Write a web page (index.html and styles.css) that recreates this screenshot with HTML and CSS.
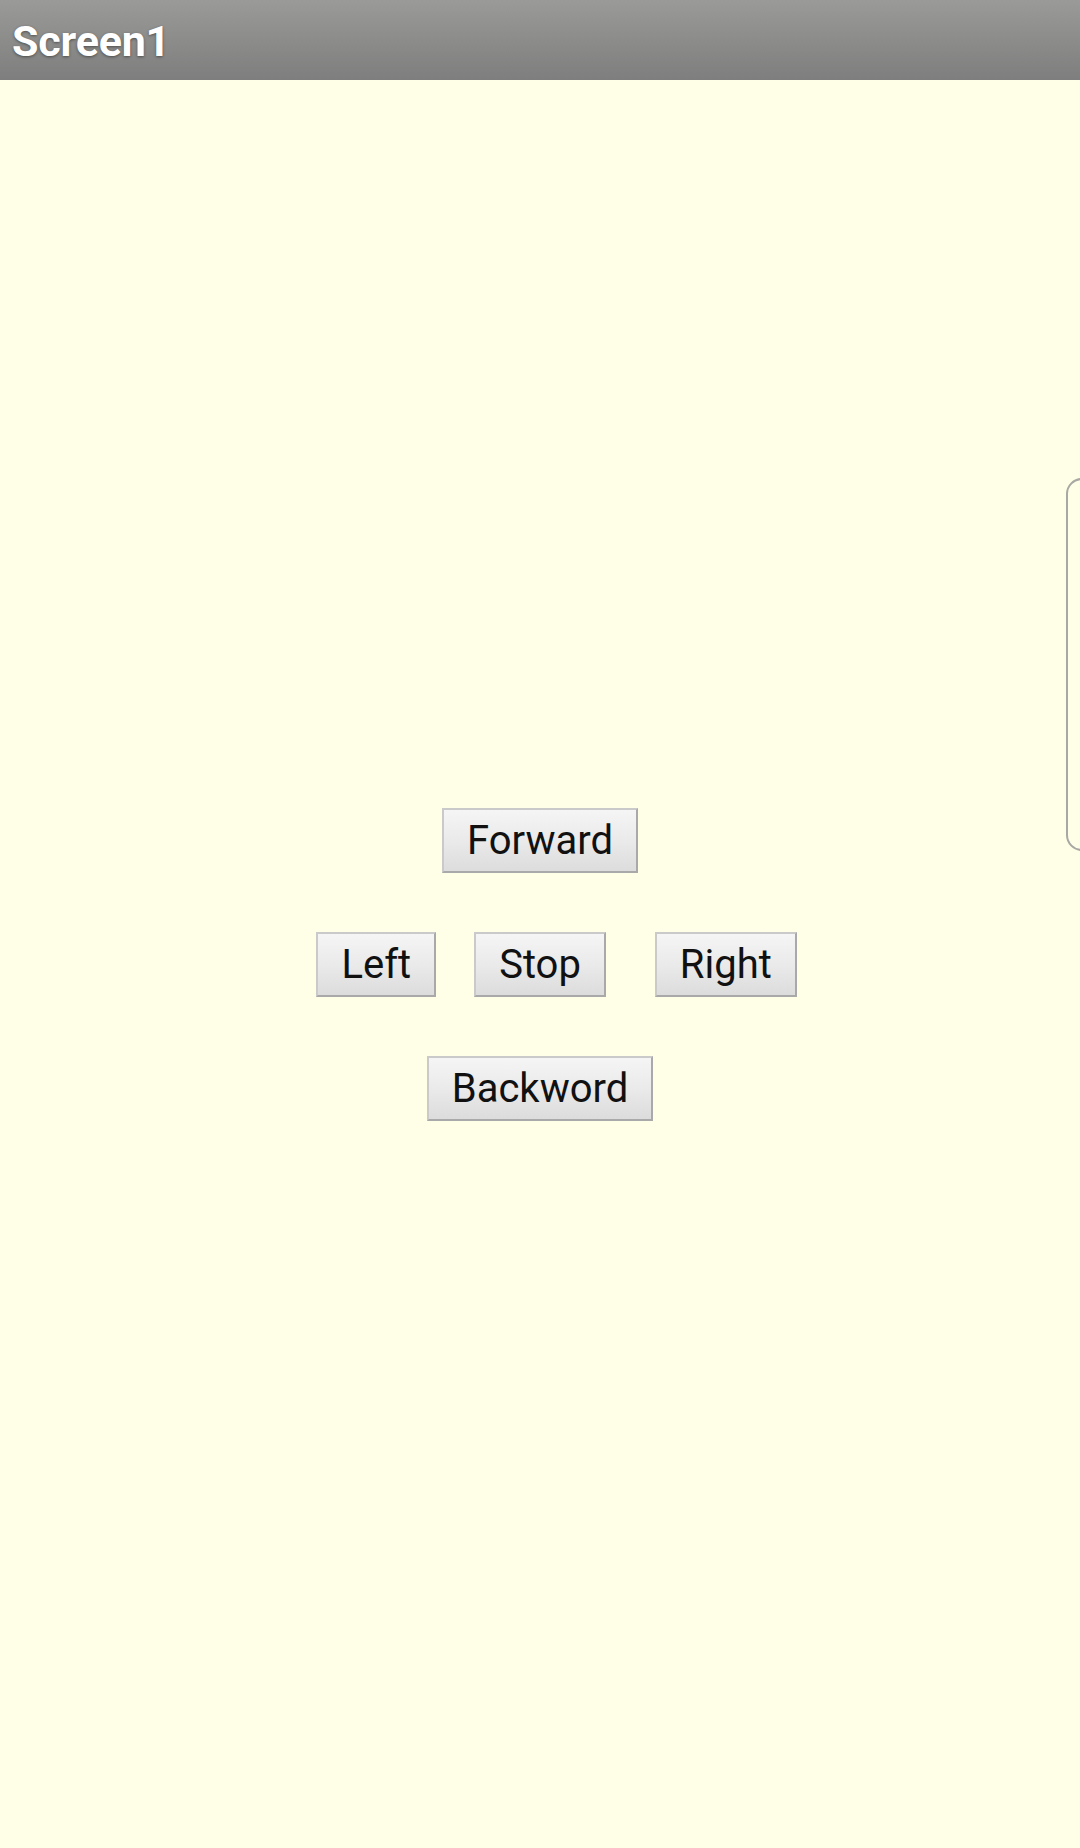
FILE: index.html
```html
<!DOCTYPE html>
<html>
<head>
<meta charset="utf-8">
<link rel="stylesheet" href="styles.css">
</head>
<body>
<div class="app">
  <header class="titlebar"><span class="title">Screen1</span></header>
  <main class="content">
    <div class="pad">
      <div class="row single"><button class="btn">Forward</button></div>
      <div class="row triple">
        <button class="btn left">Left</button>
        <button class="btn">Stop</button>
        <button class="btn right">Right</button>
      </div>
      <div class="row single"><button class="btn">Backword</button></div>
    </div>
  </main>
  <div class="edge-handle"></div>
</div>
</body>
</html>
```
FILE: styles.css
```css
html, body {
  margin: 0;
  padding: 0;
}
body {
  width: 1080px;
  height: 1848px;
  overflow: hidden;
  background: #fffee6;
  font-family: Roboto, "Liberation Sans", sans-serif;
}
.app {
  position: relative;
  display: flex;
  flex-direction: column;
  height: 1848px;
}
.titlebar {
  height: 80px;
  flex: none;
  background: linear-gradient(to bottom, #9a9a98 0%, #7e7e7e 100%);
  display: flex;
  align-items: center;
  padding-left: 12px;
  box-sizing: border-box;
}
.title {
  color: #fff;
  font-weight: 700;
  font-size: 43px;
  letter-spacing: -0.2px;
  text-shadow: 0 1px 3px rgba(0,0,0,0.45);
  margin-top: 1px;
}
.content {
  flex: 1;
  display: flex;
  align-items: center;
  justify-content: center;
}
.pad {
  display: flex;
  flex-direction: column;
  gap: 59px;
  width: 100%;
  margin-top: 1px;
}
.row.single {
  display: flex;
  justify-content: center;
}
.row.triple {
  display: grid;
  grid-template-columns: 1fr auto 1fr;
}
.btn.left {
  justify-self: end;
  margin-right: 38px;
}
.btn.right {
  justify-self: start;
  margin-left: 49px;
}
.btn {
  height: 65px;
  box-sizing: border-box;
  padding: 1px 23px 0;
  font-family: Roboto, "Liberation Sans", sans-serif;
  font-size: 40px;
  color: #111;
  background: linear-gradient(to bottom, #f5f5f5 0%, #e9e9e9 55%, #dcdcdc 100%);
  border: 2px solid;
  border-color: #cacaca #a9a9a9 #a9a9a9 #cacaca;
  border-radius: 0;
  line-height: 1;
}
.edge-handle {
  position: absolute;
  left: 1066px;
  top: 478px;
  width: 40px;
  height: 373px;
  border: 2px solid #a8a8a4;
  border-radius: 16px;
  box-sizing: border-box;
  background: #fffee6;
}
```
